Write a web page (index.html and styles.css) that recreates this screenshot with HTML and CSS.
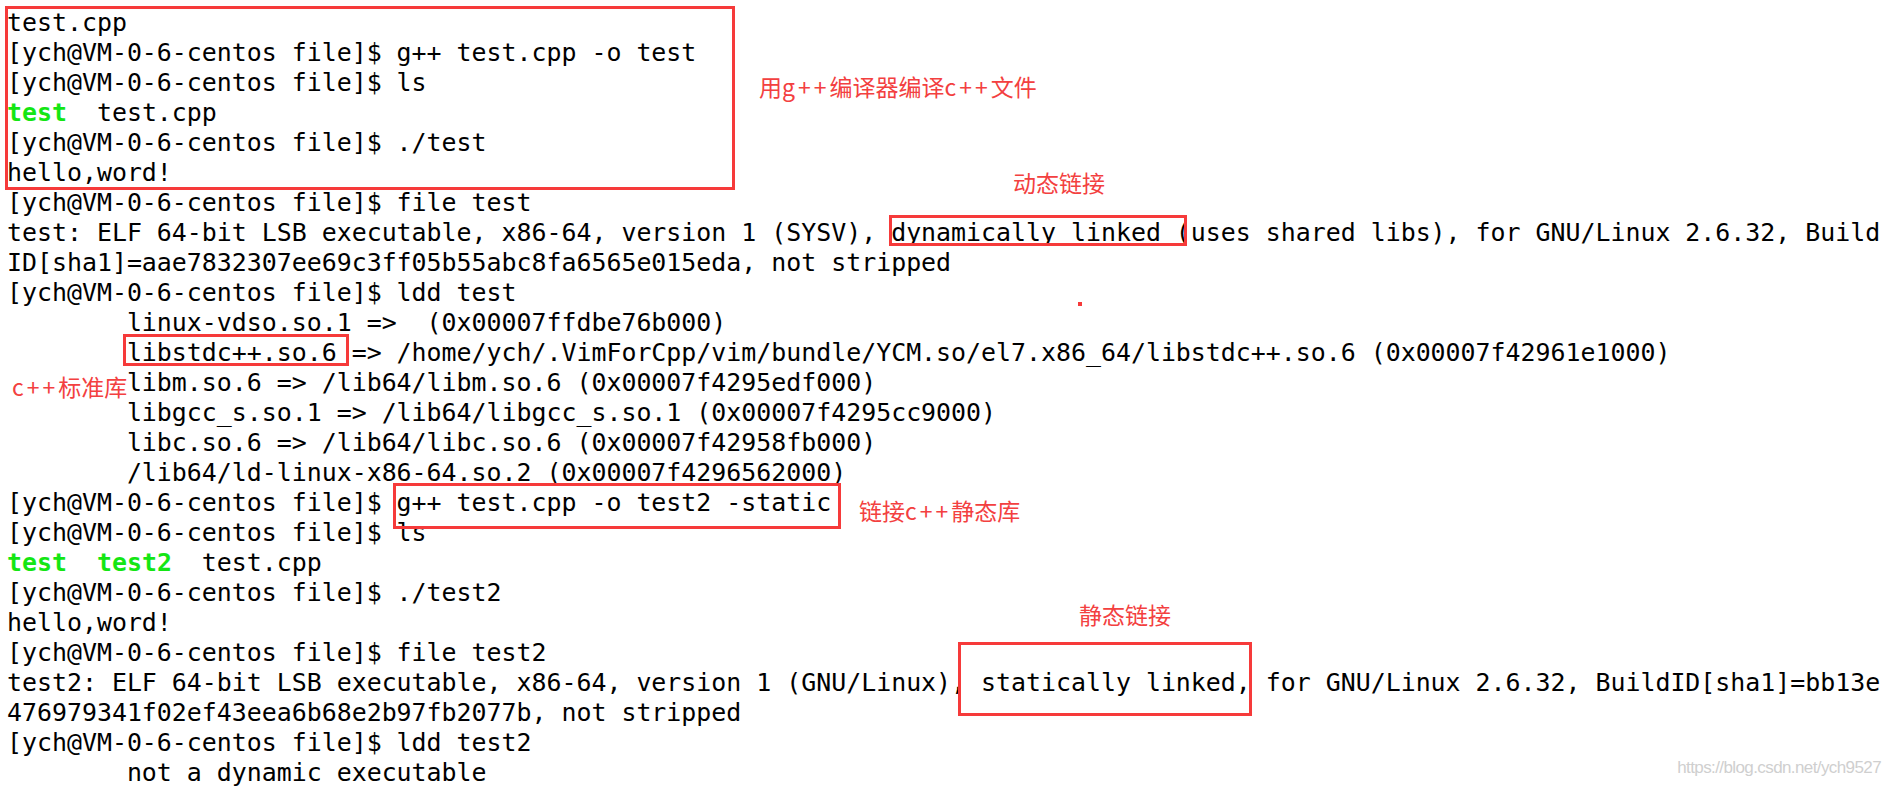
FILE: index.html
```html
<!DOCTYPE html>
<html lang="zh-CN">
<head>
<meta charset="utf-8">
<title>g++ static vs dynamic linking</title>
<link rel="stylesheet" href="styles.css">
</head>
<body>
<div class="page">
<pre class="term">test.cpp
[ych@VM-0-6-centos file]$ g++ test.cpp -o test
[ych@VM-0-6-centos file]$ ls
<b class="exe">test</b>  test.cpp
[ych@VM-0-6-centos file]$ ./test
hello,word!
[ych@VM-0-6-centos file]$ file test
test: ELF 64-bit LSB executable, x86-64, version 1 (SYSV), dynamically linked (uses shared libs), for GNU/Linux 2.6.32, Build
ID[sha1]=aae7832307ee69c3ff05b55abc8fa6565e015eda, not stripped
[ych@VM-0-6-centos file]$ ldd test
        linux-vdso.so.1 =>  (0x00007ffdbe76b000)
        libstdc++.so.6 => /home/ych/.VimForCpp/vim/bundle/YCM.so/el7.x86_64/libstdc++.so.6 (0x00007f42961e1000)
        libm.so.6 => /lib64/libm.so.6 (0x00007f4295edf000)
        libgcc_s.so.1 => /lib64/libgcc_s.so.1 (0x00007f4295cc9000)
        libc.so.6 => /lib64/libc.so.6 (0x00007f42958fb000)
        /lib64/ld-linux-x86-64.so.2 (0x00007f4296562000)
[ych@VM-0-6-centos file]$ g++ test.cpp -o test2 -static
[ych@VM-0-6-centos file]$ ls
<b class="exe">test</b>  <b class="exe">test2</b>  test.cpp
[ych@VM-0-6-centos file]$ ./test2
hello,word!
[ych@VM-0-6-centos file]$ file test2
test2: ELF 64-bit LSB executable, x86-64, version 1 (GNU/Linux), statically linked, for GNU/Linux 2.6.32, BuildID[sha1]=bb13e
476979341f02ef43eea6b68e2b97fb2077b, not stripped
[ych@VM-0-6-centos file]$ ldd test2
        not a dynamic executable</pre>

  <div class="box box-compile"></div>
  <div class="note note-compile">用<span class="lat">g++</span>编译器编译<span class="lat">c++</span>文件</div>

  <div class="box box-dynamic"></div>
  <div class="note note-dynamic">动态链接</div>
  <div class="dot"></div>

  <div class="box box-libstd"></div>
  <div class="note note-libstd"><span class="lat">c++</span>标准库</div>

  <div class="box box-static-cmd"></div>
  <div class="note note-static-cmd">链接<span class="lat">c++</span>静态库</div>

  <div class="box box-static"></div>
  <div class="note note-static">静态链接</div>

  <div class="watermark">https://blog.csdn.net/ych9527</div>
</div>
</body>
</html>
```

FILE: styles.css
```css
html, body {
  margin: 0;
  padding: 0;
  background: #ffffff;
}

.page {
  position: relative;
  width: 1891px;
  height: 786px;
  overflow: hidden;
}

.term {
  margin: 0;
  padding: 8px 0 0 7px;
  font-family: "DejaVu Sans Mono", monospace;
  font-size: 24.9px;
  line-height: 30px;
  color: #000000;
  white-space: pre;
}

.exe {
  color: #14e614;
  font-weight: bold;
}

.box {
  position: absolute;
  box-sizing: border-box;
  border: 3px solid #f63a3a;
}

.box-compile    { left: 5px;   top: 6px;   width: 730px; height: 184px; }
.box-dynamic    { left: 889px; top: 215px; width: 298px; height: 31px; }
.box-libstd     { left: 123px; top: 334px; width: 226px; height: 32px; }
.box-static-cmd { left: 393px; top: 483px; width: 448px; height: 46px; }
.box-static     { left: 958px; top: 642px; width: 294px; height: 74px; }

.note {
  position: absolute;
  font-family: "Noto Sans CJK SC", "Noto Sans", sans-serif;
  font-size: 23px;
  line-height: 23px;
  color: #f34040;
  white-space: nowrap;
}

.note .lat {
  letter-spacing: 3px;
}

.note-compile    { left: 759px;  top: 75px; }
.note-dynamic    { left: 1013px; top: 171px; }
.note-libstd     { left: 12px;   top: 375px; }
.note-static-cmd { left: 859px;  top: 499px; }
.note-static     { left: 1079px; top: 603px; }

.dot {
  position: absolute;
  left: 1078px;
  top: 302px;
  width: 4px;
  height: 4px;
  background: #f63a3a;
}

.watermark {
  position: absolute;
  right: 10px;
  top: 758px;
  font-family: "Liberation Sans", "Arial", sans-serif;
  font-size: 17px;
  line-height: 20px;
  letter-spacing: -0.6px;
  color: #cfcfcf;
  white-space: nowrap;
}
```
